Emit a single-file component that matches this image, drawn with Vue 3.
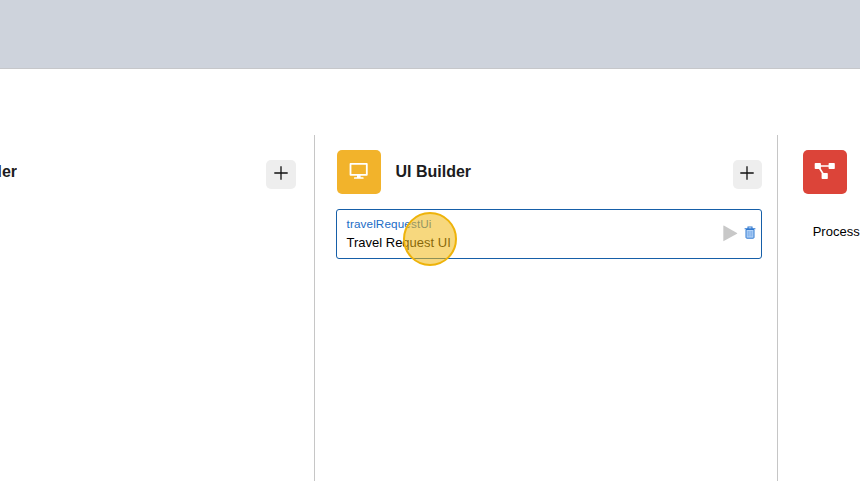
<script setup>
const app = { id: 'travelRequestUi', name: 'Travel Request UI' }
</script>

<template>
  <div class="page">
    <header class="banner"></header>
    <main class="columns">
      <section class="column first">
        <div class="head">
          <h2 class="cut"><span>Form Builder</span></h2>
          <button class="add" aria-label="Add">
            <svg viewBox="0 0 14 14" width="14" height="14"><path d="M7 .3v13.4M.3 7h13.4" /></svg>
          </button>
        </div>
      </section>
      <section class="column middle">
        <div class="head">
          <div class="tile amber">
            <svg width="20" height="18" viewBox="0 0 20 18">
              <path d="M1.500 1.900h16.300v10.900H1.500z" fill="none" stroke="#fff" stroke-width="1.800" stroke-linejoin="round" />
              <path d="M8 13h3.600v2.200H14q.6 0 .6.600v1H5v-1q0-.6.6-.6H8z" fill="#fff" />
            </svg>
          </div>
          <h2>UI Builder</h2>
          <button class="add" aria-label="Add">
            <svg viewBox="0 0 14 14" width="14" height="14"><path d="M7 .3v13.4M.3 7h13.4" /></svg>
          </button>
        </div>
        <article class="card">
          <div class="labels">
            <div class="id">{{ app.id }}</div>
            <div class="name">{{ app.name }}</div>
          </div>
          <svg class="play" width="15" height="17" viewBox="0 0 15 17">
            <path d="M.8.500 14 7.900q.6.400 0 .8L.8 16.100q-.5.200-.5-.4V.9q0-.6.5-.4z" fill="#c8c8c8" />
          </svg>
          <svg class="trash" width="12" height="13" viewBox="0 0 12 13">
            <path d="M2 3.500h8v7.900q0 .8-.8.8H2.800q-.8 0-.8-.8z" fill="#b4d3f7" stroke="#2f78d0" stroke-width="1" />
            <path d="M.6 2.700h10.800M4 2.500V1h4v1.500" fill="none" stroke="#2f78d0" stroke-width="1.100" />
            <path d="M4.200 5v5.500M6 5v5.500M7.800 5v5.500" stroke="#5f9be2" stroke-width=".7" />
          </svg>
          <span class="marker"></span>
        </article>
      </section>
      <section class="column last">
        <div class="tile red">
          <svg width="22" height="18" viewBox="0 0 22 18">
            <path d="M4 4h14M4 4l6.600 10" stroke="#fff" stroke-width="1.700" />
            <rect x=".7" y="1" width="6.200" height="6" rx=".8" fill="#fff" />
            <rect x="14.600" y="1" width="6.200" height="6" rx=".8" fill="#fff" />
            <rect x="7.600" y="10.900" width="6.200" height="6.100" rx=".8" fill="#fff" />
          </svg>
        </div>
        <p>Process</p>
      </section>
    </main>
  </div>
</template>

<style>
body { margin: 0; background: #fff; }
</style>

<style scoped>
.page {
  width: 860px;
  height: 481px;
  overflow: hidden;
  box-sizing: border-box;
  display: flex;
  flex-direction: column;
  gap: 66px;
  background: #fff;
  font-family: "Liberation Sans", Arial, sans-serif;
  color: #000;
}
.banner { height: 69px; flex: none; box-sizing: border-box; background: #ced3dc; border-bottom: 1px solid #c6c7ca; }
.columns { flex: 1; display: grid; grid-template-columns: 315px 463px 82px; }
.column { box-sizing: border-box; padding-top: 15px; border-right: 1px solid #c6c6c6; min-width: 0; }
.first { padding-right: 18px; }
.middle { padding-left: 21px; padding-right: 15px; }
.last { padding-left: 25px; border: 0; overflow: hidden; }
.head { display: flex; align-items: flex-start; height: 44px; }
.middle .head { padding-left: 1px; }
h2 { margin: 12px 0 0; font-size: 16px; line-height: 20px; font-weight: 700; color: #1c1c20; white-space: nowrap; }
.middle h2 { margin-left: 14.5px; }
.cut { width: 17px; display: flex; justify-content: flex-end; overflow: hidden; }
.add {
  box-sizing: border-box;
  margin: 10px 0 0 auto;
  width: 29px;
  height: 29px;
  padding: 6px 1px 0 0;
  border: 0;
  border-radius: 5px;
  background: #eee;
  display: flex;
  justify-content: center;
  align-items: flex-start;
}
.first .add { width: 30px; }
.add path { stroke: #111; stroke-width: 1.3; fill: none; }
.tile { width: 44px; height: 44px; border-radius: 5px; display: flex; align-items: center; justify-content: center; }
.amber { background: #f2b32b; }
.amber svg { margin-bottom: 2px; }
.red { background: #dc4439; }
.red svg { margin-bottom: 2px; }
.card {
  position: relative;
  box-sizing: border-box;
  height: 50px;
  margin-top: 15px;
  border: 1px solid #165fa8;
  border-radius: 3px;
  display: flex;
  align-items: center;
  padding: 0 5px 1px 9.5px;
}
.labels { flex: 1; }
.id { font-size: 11.7px; letter-spacing: .13px; line-height: 18px; color: #1b6cc6; }
.name { margin-top: 1px; font-size: 13px; line-height: 18px; }
.play { margin: 0 6px 1px 0; }
.trash { margin-bottom: 2px; }
.marker {
  position: absolute;
  left: 65.5px;
  top: 2.3px;
  width: 54px;
  height: 54px;
  box-sizing: border-box;
  border: 2px solid #eeb30a;
  border-radius: 50%;
  background: rgba(240, 184, 20, .55);
}
p { margin: 29px 0 0 9.7px; font-size: 13px; line-height: 18px; white-space: nowrap; }
</style>
